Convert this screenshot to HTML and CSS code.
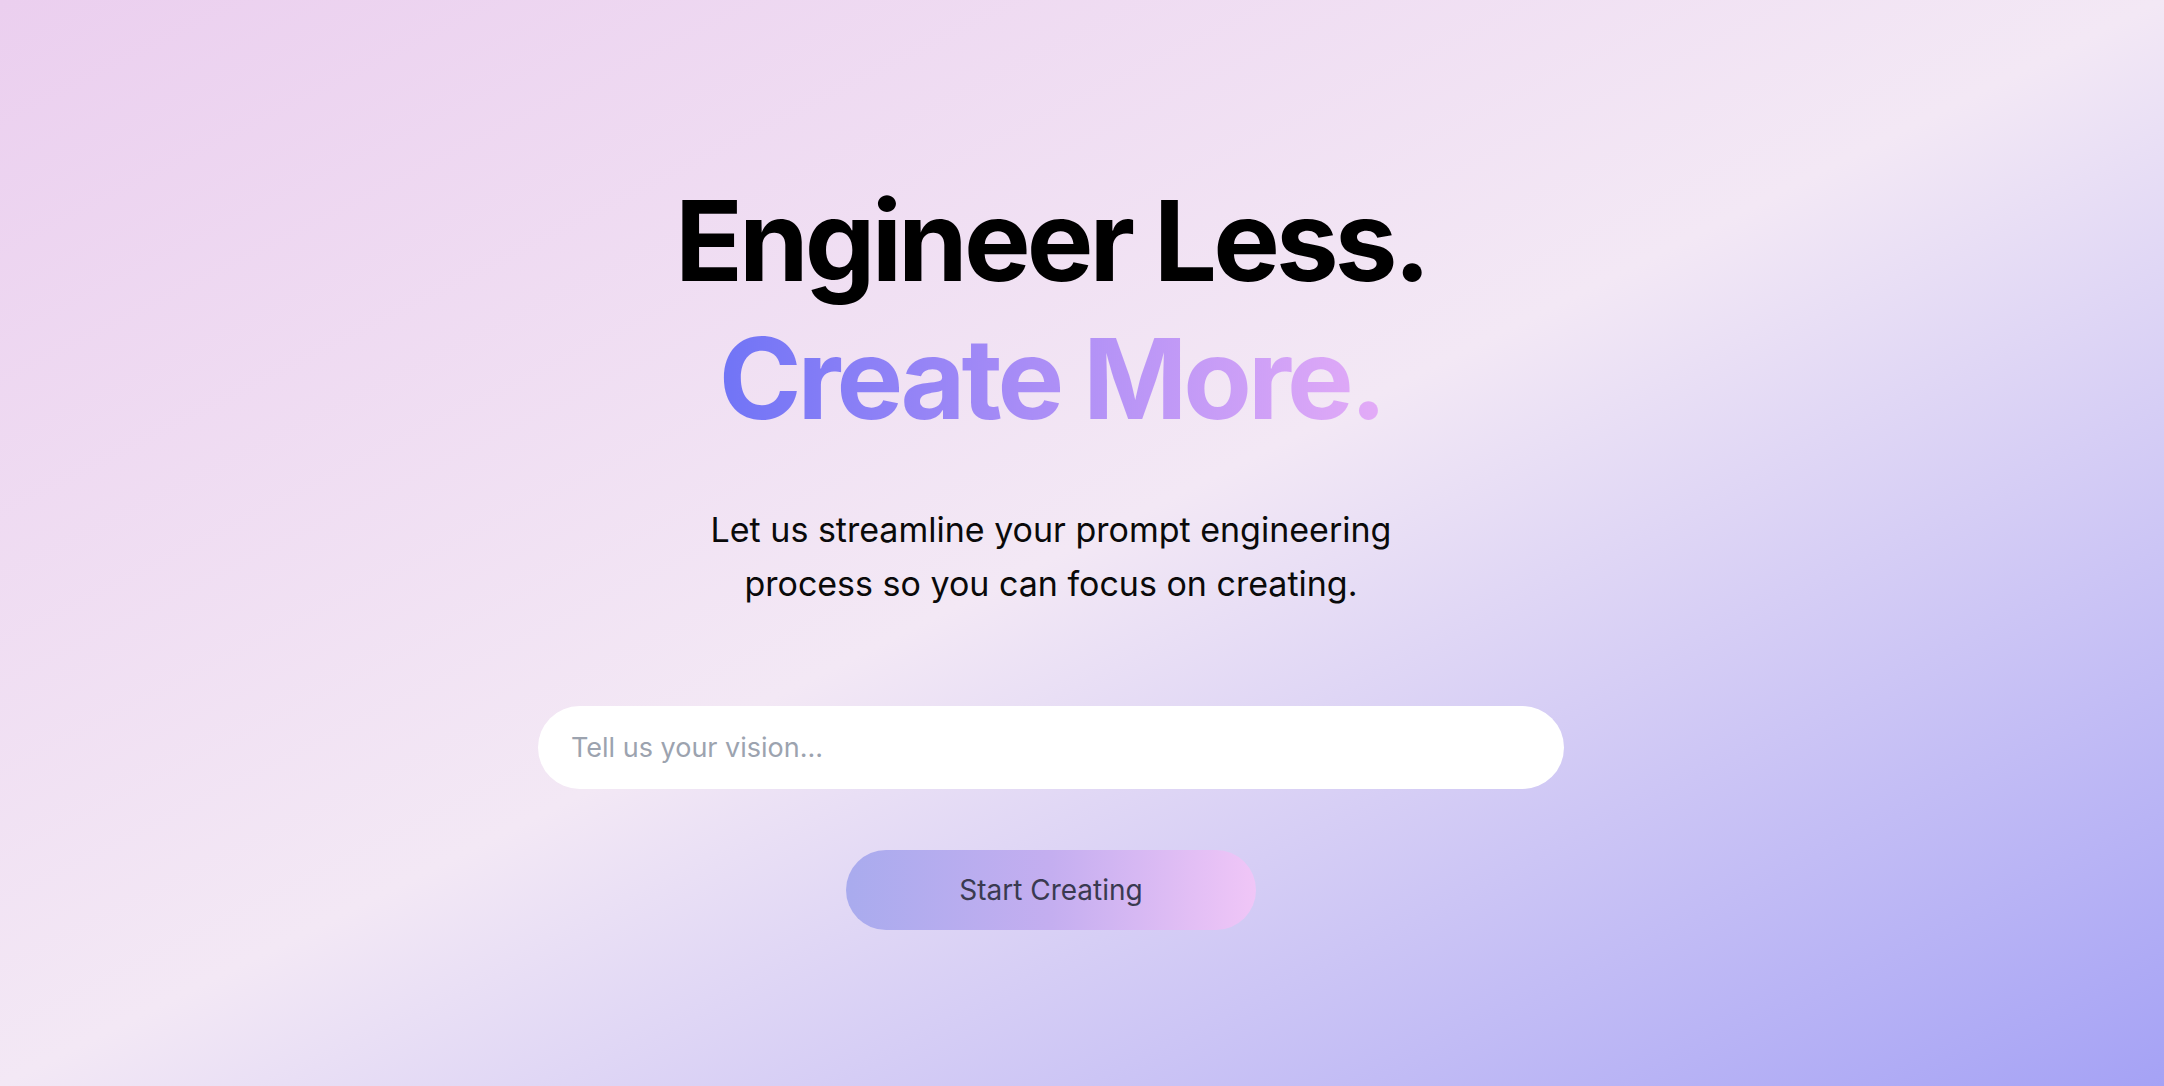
FILE: index.html
```html
<!DOCTYPE html>
<html lang="en">
<head>
<meta charset="utf-8">
<title>Engineer Less. Create More.</title>
<link rel="stylesheet" href="styles.css">
</head>
<body>
<main class="hero">
  <h1 class="title">
    <span class="title-line">Engineer Less.</span>
    <span class="title-line title-gradient">Create More.</span>
  </h1>
  <p class="lead">Let us streamline your prompt engineering<br>process so you can focus on creating.</p>
  <form class="prompt-form" onsubmit="return false;">
    <input class="vision-input" type="text" placeholder="Tell us your vision...">
    <button class="start-btn" type="submit">Start Creating</button>
  </form>
</main>
</body>
</html>
```

FILE: styles.css
```css
* {
  box-sizing: border-box;
}

html, body {
  margin: 0;
  padding: 0;
  height: 100%;
}

body {
  font-family: Inter, "Noto Sans", "Liberation Sans", sans-serif;
  background: linear-gradient(to bottom right, #ebcfef 0%, #f3e8f5 50%, #a5a2f5 100%);
  color: #000;
  overflow: hidden;
}

.hero {
  min-height: 100%;
  display: flex;
  flex-direction: column;
  align-items: center;
  padding-top: 171px;
  padding-right: 62px;
  text-align: center;
}

.title {
  margin: 0;
  font-size: 112px;
  line-height: 138px;
  font-weight: 700;
  letter-spacing: -0.035em;
}

.title-line {
  display: block;
}

.title-gradient {
  display: inline-block;
  background: linear-gradient(to right, #7074f6 0%, #a78cf6 45%, #e3abf7 100%);
  -webkit-background-clip: text;
  background-clip: text;
  color: transparent;
}

.lead {
  margin: 56px 0 0;
  font-size: 34px;
  line-height: 54px;
  font-weight: 400;
  color: #0a0a0a;
}

.prompt-form {
  margin-top: 95px;
  display: flex;
  flex-direction: column;
  align-items: center;
  gap: 61px;
}

.vision-input {
  width: 1026px;
  height: 83px;
  border: none;
  outline: none;
  border-radius: 9999px;
  background: #ffffff;
  padding: 0 33px;
  font-family: inherit;
  font-size: 27px;
  color: #1f2937;
}

.vision-input::placeholder {
  color: #9ca3af;
}

.start-btn {
  width: 410px;
  height: 80px;
  border: none;
  border-radius: 9999px;
  background: linear-gradient(to right, #a9abee 0%, #c4aef0 50%, #f0c6f7 100%);
  font-family: inherit;
  font-size: 28px;
  color: #3a3a50;
  cursor: pointer;
}
```
